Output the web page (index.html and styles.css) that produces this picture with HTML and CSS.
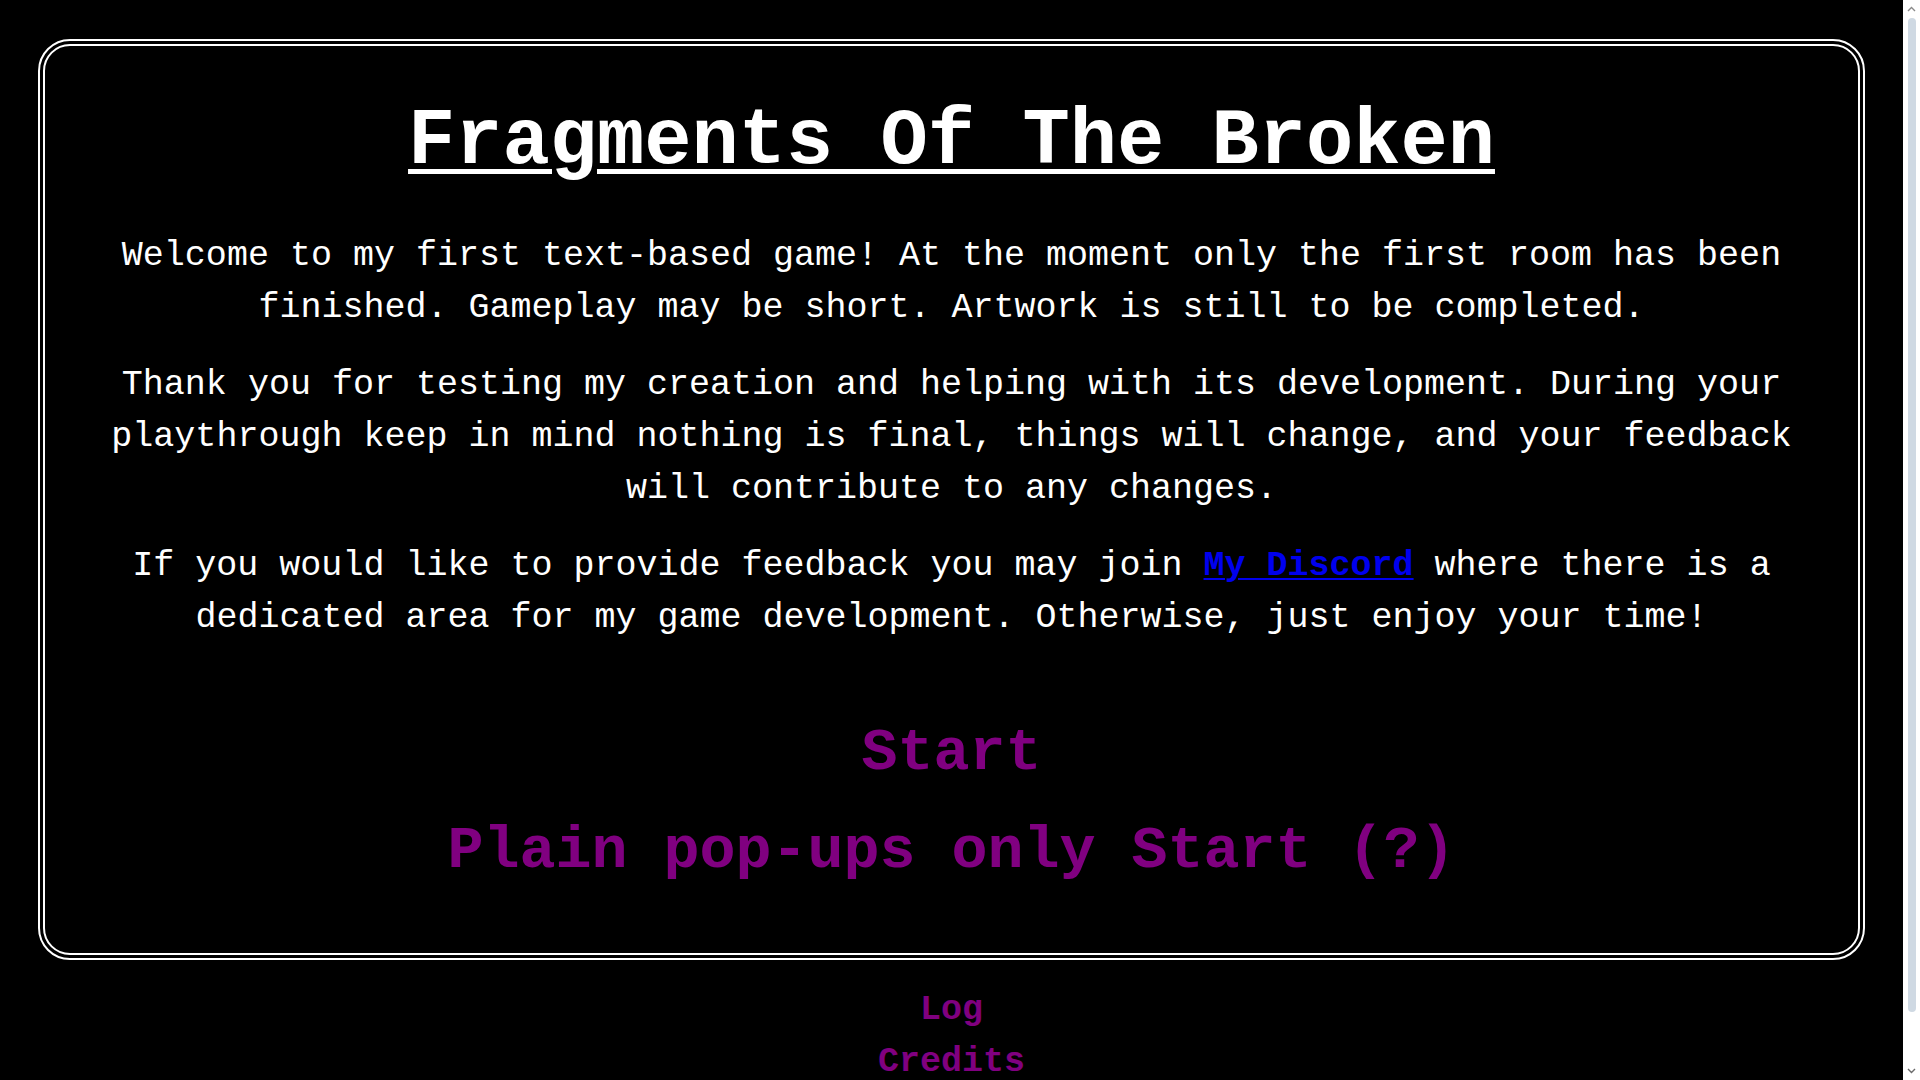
FILE: index.html
```html
<!DOCTYPE html>
<html lang="en">
<head>
<meta charset="utf-8">
<title>Fragments Of The Broken</title>
<link rel="stylesheet" href="styles.css">
</head>
<body>
<main class="frame">
  <h1 class="title">Fragments Of The Broken</h1>
  <p class="intro">Welcome to my first text-based game! At the moment only the first room has been finished. Gameplay may be short. Artwork is still to be completed.</p>
  <p class="intro">Thank you for testing my creation and helping with its development. During your playthrough keep in mind nothing is final, things will change, and your feedback will contribute to any changes.</p>
  <p class="intro">If you would like to provide feedback you may join <a class="discord" href="#">My Discord</a> where there is a dedicated area for my game development. Otherwise, just enjoy your time!</p>
  <div class="starts">
    <a class="start" href="#">Start</a>
    <a class="start" href="#">Plain pop-ups only Start (?)</a>
  </div>
</main>
<nav class="footer-links">
  <a class="small-link" href="#">Log</a>
  <a class="small-link" href="#">Credits</a>
</nav>
<div class="scrollbar" aria-hidden="true">
  <svg class="arrow" width="9" height="6" viewBox="0 0 9 6"><path d="M1 5 L4.5 1.5 L8 5" fill="none" stroke="#8a8a8a" stroke-width="1.4"/></svg>
  <div class="thumb"></div>
  <svg class="arrow" width="9" height="6" viewBox="0 0 9 6"><path d="M1 1 L4.5 4.5 L8 1" fill="none" stroke="#6a6a6a" stroke-width="1.4"/></svg>
</div>
</body>
</html>
```
FILE: styles.css
```css
html, body {
  background: #000;
}
body {
  margin: 8px 25px 8px 8px;
  color: #fff;
  font-family: "Liberation Mono", "Courier New", monospace;
  font-size: 35px;
}
.frame {
  margin: 31px 30px 0;
  border: 7px double #fff;
  border-radius: 32px;
  padding: 51px 60px 68px;
  text-align: center;
}
.title {
  margin: 0 0 43px;
  font-size: 78.75px;
  font-weight: bold;
  line-height: normal;
  text-decoration: underline;
  text-decoration-thickness: 5px;
  text-underline-offset: 6px;
}
.intro {
  margin: 0 0 25px;
  line-height: 52px;
}
.intro:last-of-type {
  margin-bottom: 0;
}
.discord {
  color: #0000ee;
  font-weight: bold;
  text-decoration: underline;
  text-decoration-thickness: 2px;
  text-underline-offset: 3px;
}
.starts {
  display: flex;
  flex-direction: column;
  align-items: center;
  gap: 30px;
  margin-top: 75px;
}
.start {
  color: #800080;
  font-size: 60px;
  font-weight: bold;
  line-height: normal;
  text-decoration: none;
}
.footer-links {
  display: flex;
  flex-direction: column;
  align-items: center;
  padding: 24px 0 38px;
}
.small-link {
  color: #800080;
  font-weight: bold;
  line-height: 52px;
  text-decoration: none;
}
.scrollbar {
  position: fixed;
  top: 0;
  right: 0;
  width: 17px;
  height: 100vh;
  background: #fff;
  display: flex;
  flex-direction: column;
  align-items: center;
  padding: 6px 0;
  box-sizing: border-box;
  gap: 6px;
}
.arrow {
  flex: none;
}
.thumb {
  flex: 1;
  width: 8px;
  margin-bottom: 50px;
  border-radius: 4px;
  background: #cfd9e3;
}
```
